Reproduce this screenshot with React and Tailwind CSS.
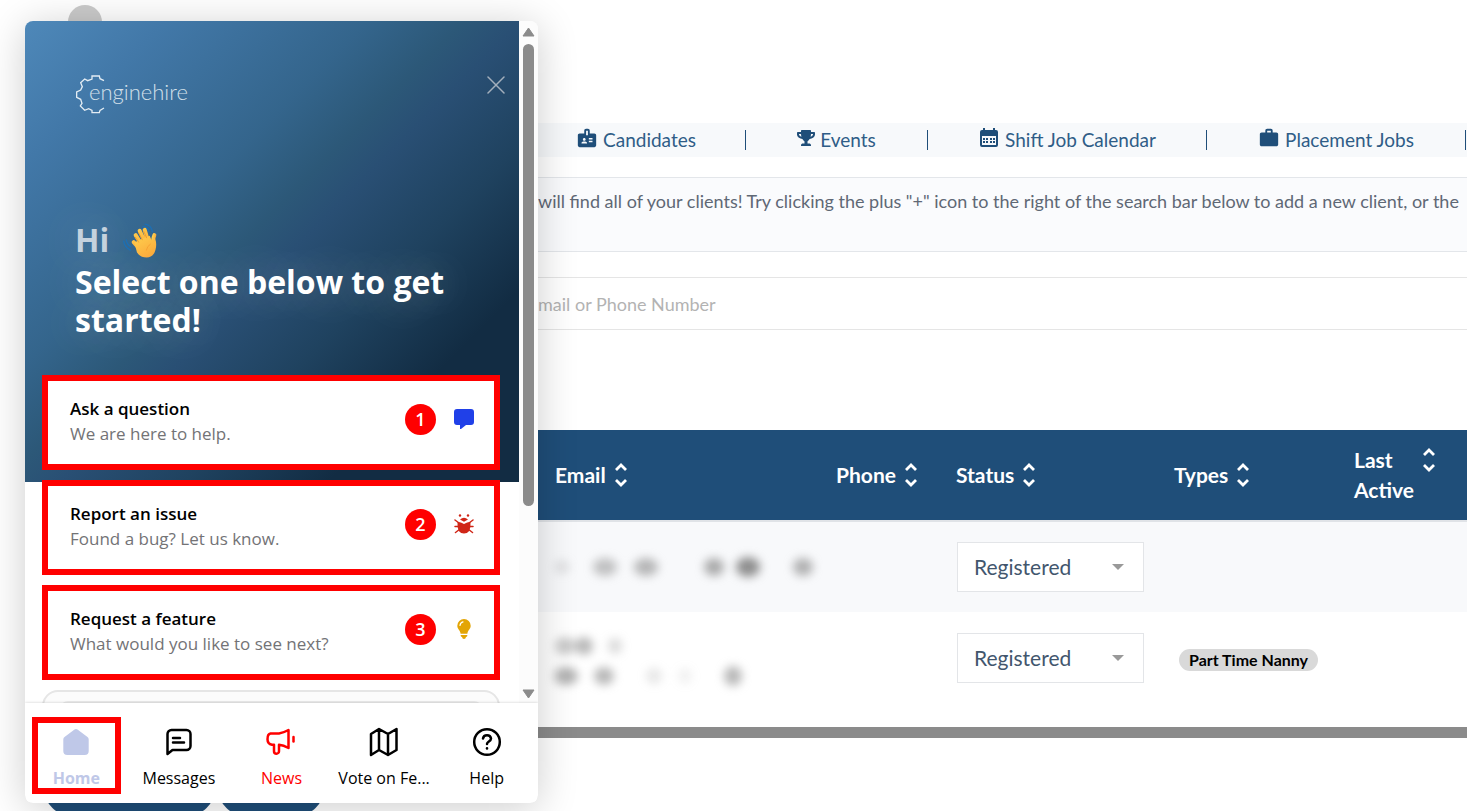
import { FaTrophy } from 'react-icons/fa'
import { MdBadge, MdWork } from 'react-icons/md'

const NAV_ITEMS = [
  { label: 'Candidates', icon: MdBadge, width: 'w-[219px]' },
  { label: 'Events', icon: FaTrophy, width: 'w-[182px]' },
  { label: 'Shift Job Calendar', icon: CalendarIcon, width: 'w-[279px]' },
  { label: 'Placement Jobs', icon: MdWork, width: 'w-[259px]' },
]

const COLUMNS = [
  { label: 'Email', width: 'w-[281px]' },
  { label: 'Phone', width: 'w-[120px]' },
  { label: 'Status', width: 'w-[218px]' },
  { label: 'Types', width: 'w-[180px]' },
  { label: 'Last Active', width: 'w-auto' },
]

const CARDS = [
  { title: 'Ask a question', text: 'We are here to help.', icon: ChatIcon },
  { title: 'Report an issue', text: 'Found a bug? Let us know.', icon: BugIcon },
  { title: 'Request a feature', text: 'What would you like to see next?', icon: BulbIcon },
]

const TABS = [
  { label: 'Home', icon: HomeIcon, color: 'border-[#ff0000] text-[#bfc8e8] font-bold' },
  { label: 'Messages', icon: MessagesIcon, color: 'border-transparent text-black' },
  { label: 'News', icon: NewsIcon, color: 'border-transparent text-[#ff0000]' },
  { label: 'Vote on Fe...', icon: MapIcon, color: 'border-transparent text-black' },
  { label: 'Help', icon: HelpIcon, color: 'border-transparent text-black' },
]

export default function App() {
  return (
    <div className="relative h-screen overflow-hidden bg-white font-[Lato,sans-serif]">
      <header className="h-[123px] px-[68px] pt-[5px]">
        <div className="size-[34px] rounded-full bg-[#cbcbcb]" />
      </header>

      <main className="ml-[538px]">
        <NavBar />
        <p className="mt-5 h-[75px] overflow-hidden border-y border-[#e3e6ea] bg-[#fafbfd] pt-[11px] text-lg leading-6 whitespace-nowrap text-[#5f6875]">
          will find all of your clients! Try clicking the plus "+" icon to the right of the search bar below to add a new client, or the
        </p>
        <input
          type="text"
          aria-label="Search clients"
          placeholder="mail or Phone Number"
          className="mt-[25px] block h-[53px] w-full border-y border-[#e5e5e5] text-lg outline-none placeholder:text-[#b3b3b3]"
        />
        <ClientTable />
      </main>

      <div className="mt-[22px] ml-[44px] flex gap-[3px]">
        <button aria-label="Add client" className="h-14 w-[171px] rounded-full bg-[#1f4e79]" />
        <button aria-label="Export" className="h-14 w-[106px] rounded-full bg-[#1f4e79]" />
      </div>

      <Messenger />
    </div>
  )
}

function NavBar() {
  return (
    <nav className="h-[34px] overflow-hidden bg-[#f7f9fb]">
      <div className="-ml-[11px] flex h-full items-center">
        {NAV_ITEMS.map(({ label, icon: Icon, width }) => (
          <a
            key={label}
            href="#"
            className={`${width} flex h-5 shrink-0 items-center justify-center gap-[5px] border-r border-[#1f4e79] text-[19px] text-[#2f5d87]`}
          >
            <Icon className={`mb-1 shrink-0 text-[#1f4e79] ${label === 'Events' ? 'size-[18px]' : 'size-[22px]'}`} />
            {label}
          </a>
        ))}
      </div>
    </nav>
  )
}

function ClientTable() {
  return (
    <div className="mt-[100px] h-[308px] border-b-[11px] border-[#8b8b8b]">
      <table className="w-full table-fixed border-collapse text-left">
        <thead>
          <tr className="h-[91px] bg-[#1f4e79] text-[21px] leading-[30px] text-white">
            {COLUMNS.map(({ label, width }) => (
              <th key={label} className={`${width} p-0 pl-[17px] font-bold`}>
                <div className="flex">
                  <span className={label === 'Last Active' ? 'w-[60px]' : ''}>{label}</span>
                  <SortIcon />
                </div>
              </th>
            ))}
          </tr>
        </thead>
        <tbody>
          <tr className="h-[91px] border-t-2 border-[#e0e3e7] bg-[#f8f9fb]">
            <td className="pl-[17px]">
              <svg width="260" height="60" className="blur-[5px]" fill="#888">
                <ellipse cx="7" cy="30" rx="8" ry="7" opacity="0.2" />
                <ellipse cx="50" cy="30" rx="12" ry="9" opacity="0.5" />
                <ellipse cx="91" cy="30" rx="12" ry="9" opacity="0.6" />
                <ellipse cx="159" cy="30" rx="10" ry="9" opacity="0.7" />
                <ellipse cx="193" cy="30" rx="12" ry="10" opacity="0.95" />
                <ellipse cx="248" cy="30" rx="10" ry="9" opacity="0.65" />
              </svg>
            </td>
            <td />
            <td className="pl-[18px]">
              <StatusSelect />
            </td>
            <td />
            <td />
          </tr>
          <tr className="h-[91px]">
            <td className="pl-[17px]">
              <svg width="260" height="70" className="blur-[5px]" fill="#888">
                <ellipse cx="10" cy="23" rx="10" ry="9" opacity="0.45" />
                <ellipse cx="29" cy="23" rx="9" ry="9" opacity="0.6" />
                <ellipse cx="60" cy="23" rx="7" ry="8" opacity="0.3" />
                <ellipse cx="11" cy="53" rx="12" ry="9" opacity="0.65" />
                <ellipse cx="49" cy="53" rx="10" ry="9" opacity="0.6" />
                <ellipse cx="99" cy="53" rx="8" ry="8" opacity="0.2" />
                <ellipse cx="130" cy="53" rx="7" ry="8" opacity="0.12" />
                <ellipse cx="178" cy="53" rx="9" ry="10" opacity="0.6" />
              </svg>
            </td>
            <td />
            <td className="pl-[18px]">
              <StatusSelect />
            </td>
            <td className="pt-1 pl-[22px]">
              <span className="inline-block rounded-full bg-[#d9d9d9] px-[10px] text-base leading-[22px] font-bold text-black">
                Part Time Nanny
              </span>
            </td>
            <td />
          </tr>
        </tbody>
      </table>
    </div>
  )
}

function StatusSelect() {
  return (
    <div className="relative w-[187px]">
      <select
        aria-label="Status"
        className="h-[50px] w-full appearance-none border border-[#e3e5e8] bg-white pl-4 text-[21px] text-[#42566d]"
      >
        <option>Registered</option>
      </select>
      <svg viewBox="0 0 12 6" className="pointer-events-none absolute top-[22px] right-5 h-[6px] w-3" fill="#999">
        <path d="M0 0h12L6 6z" />
      </svg>
    </div>
  )
}

function Messenger() {
  return (
    <section className="absolute top-[21px] left-[25px] flex h-[782px] w-[513px] flex-col overflow-hidden rounded-lg bg-white font-['Open_Sans',sans-serif] shadow-[0_5px_40px_rgba(0,0,0,0.2)]">
      <div className="flex min-h-0 flex-1">
        <div className="min-w-0 flex-1 overflow-hidden">
          <div className="h-[461px] bg-[linear-gradient(135deg,#4e88b9_0%,#4278a8_15%,#34658c_36%,#2c5878_46%,#294f74_52%,#1f425f_65%,#122c43_80%)] pt-[53px] pr-[14px] pl-[50px]">
            <div className="flex items-start justify-between">
              <Logo />
              <button aria-label="Close" className="mt-[2px]">
                <svg viewBox="0 0 18 18" className="size-[18px]" fill="none" stroke="#a3afbc" strokeWidth="1.5" strokeLinecap="round">
                  <path d="M1 1l16 16M17 1L1 17" />
                </svg>
              </button>
            </div>
            <h1 className="mt-[107px] text-[32px] leading-[38px] font-bold text-white [text-shadow:0_0_40px_rgba(255,255,255,0.35)]">
              <span className="flex items-center gap-[14px] pb-1 text-[#c5d2de]">
                Hi <WaveIcon />
              </span>
              Select one below to get started!
            </h1>
          </div>
          <div className="relative -mt-[107px] mr-[19px] ml-[17px] flex flex-col gap-[10px]">
            {CARDS.map(({ title, text, icon: Icon }, i) => (
              <button
                key={title}
                className="flex h-[95px] items-center border-6 border-[#ff0000] bg-white pr-5 pb-[3px] pl-[22px] text-left text-[17px] leading-[25px]"
              >
                <span className="flex-1">
                  <span className="block font-semibold text-black">{title}</span>
                  <span className="block text-[#737376]">{text}</span>
                </span>
                <span className="mb-1 flex items-center gap-[18px]">
                  <span className="flex size-[31px] items-center justify-center rounded-full bg-[#ff0000] text-lg font-semibold text-white">
                    {i + 1}
                  </span>
                  <Icon />
                </span>
              </button>
            ))}
            <div className="h-20 rounded-2xl border-2 border-[#e6e6e6] bg-[#fcfcfc] px-4 pt-[9px]">
              <div className="h-10 rounded-lg border-2 border-[#ececec] bg-[#f7f7f7]" />
            </div>
          </div>
        </div>
        <div className="flex w-[19px] flex-col items-center bg-[#fcfcfc] pt-[6px] pb-1">
          <svg viewBox="0 0 13 10" className="h-[10px] w-[13px]" fill="#8b8b8b" stroke="#8b8b8b" strokeLinejoin="round">
            <path d="M6.500 1L12 9H1z" />
          </svg>
          <div className="mt-[7px] h-[462px] w-[11px] rounded-full bg-[#8b8b8b]" />
          <svg viewBox="0 0 13 10" className="mt-auto h-[10px] w-[13px]" fill="#8b8b8b" stroke="#8b8b8b" strokeLinejoin="round">
            <path d="M6.500 9L12 1H1z" />
          </svg>
        </div>
      </div>
      <nav className="relative flex h-[100px] bg-white pt-[14px] pb-[9px] shadow-[0_0_3px_rgba(0,0,0,0.2)]">
        {TABS.map(({ label, icon: Icon, color }) => (
          <button
            key={label}
            className={`${color} mx-[7px] flex min-w-0 flex-1 basis-0 flex-col items-center border-6 pt-1 text-base leading-5 whitespace-nowrap`}
          >
            <Icon />
            <span className="mt-[11px]">{label}</span>
          </button>
        ))}
      </nav>
    </section>
  )
}

function Logo() {
  return (
    <div className="flex items-start">
      <svg viewBox="165 222 90 120" className="h-10 w-[30px]" fill="none" stroke="#e3ecf3" strokeWidth="4">
        <path d="M252 242l-12-6-2-8h-22v9l-13 5-9-5-12 11 5 12-5 10-12 6v16l12 6 4 12-5 8 13 13 12-5 10 5v7h22l2-7 12-7" />
      </svg>
      <span className="-ml-[16px] pt-1 font-[Lato,sans-serif] text-[22px] leading-7 font-light text-[#d3e0ea]">enginehire</span>
    </div>
  )
}

function WaveIcon() {
  return (
    <svg viewBox="0 0 102 104" className="h-[35px] w-[34px]" fill="none" strokeLinecap="round">
      <defs>
        <linearGradient id="hand" x1="0" y1="0" x2="0.6" y2="1">
          <stop offset="0" stopColor="#ffd04f" />
          <stop offset="1" stopColor="#fbab3b" />
        </linearGradient>
      </defs>
      <path d="M66 3q18 2 22 22M60 10q14 2 18 16" stroke="#1c6fb5" strokeWidth="4" />
      <path d="M2 54q2 18 20 27M10 50q1 12 13 20" stroke="#1c6fb5" strokeWidth="4" />
      <g stroke="url(#hand)" strokeWidth="12">
        <path d="M32 57l18 20M38 36l20 32M50 23l18 38M65 20l12 40" />
        <path d="M94 36q-6 14-2 34" />
      </g>
      <path d="M34 58q20-10 46-20l6 14q4-6 4-12 12 10 9 32-4 30-28 31-19 0-29-15z" fill="url(#hand)" />
      <path d="M47 57L37 42M58 50L47 29M71 44l-9-20" stroke="#e98f22" strokeWidth="2" />
      <path d="M82 63q-10 6-12 18" stroke="#f3992e" strokeWidth="2" />
    </svg>
  )
}

function CalendarIcon({ className }) {
  return (
    <svg viewBox="0 0 22 22" className={className} fill="currentColor">
      <path
        fillRule="evenodd"
        d="M5 1h2v2h8V1h2v2h1a2 2 0 0 1 2 2v13a2 2 0 0 1-2 2H4a2 2 0 0 1-2-2V5a2 2 0 0 1 2-2h1zM4 9v9h14V9z"
      />
      <path d="M5 11h2v2H5zM8 11h2v2H8zM12 11h2v2h-2zM15 11h2v2h-2zM5 14h2v2H5zM8 14h2v2H8zM12 14h2v2h-2zM15 14h2v2h-2z" />
    </svg>
  )
}

function SortIcon() {
  return (
    <svg viewBox="0 0 12 24" className="mt-[3px] ml-[9px] h-6 w-3 shrink-0" fill="none" stroke="currentColor" strokeWidth="2.800">
      <path d="M1 7l5-5 5 5M1 17l5 5 5-5" />
    </svg>
  )
}

function ChatIcon() {
  return (
    <svg viewBox="0 0 20 20" className="size-5" fill="#2040e8">
      <path d="M3 0h14a3 3 0 0 1 3 3v10a3 3 0 0 1-3 3h-5l-5 4h-1v-4H3a3 3 0 0 1-3-3V3a3 3 0 0 1 3-3z" />
    </svg>
  )
}

function BugIcon() {
  return (
    <svg viewBox="0 0 20 20" className="size-5" fill="#d02617">
      <circle cx="6" cy="1.500" r="1.200" />
      <circle cx="14" cy="1.500" r="1.200" />
      <path d="M6 5.500q4-3.500 8 0l-4 2.300z" />
      <path d="M3.500 8q3.500 0 6.500 2 3-2 6.500-2 .8 11.500-6.500 11.500T3.500 8z" />
      <path
        d="M1 6l4 3M1 12.500h5M1.500 18.500L6 15M19 6l-4 3M19 12.500h-5M18.500 18.500L14 15"
        stroke="#d02617"
        strokeWidth="1.500"
        strokeLinecap="round"
      />
    </svg>
  )
}

function BulbIcon() {
  return (
    <svg viewBox="0 0 20 20" className="size-5" fill="#e3a505">
      <path d="M10 0a6.700 6.700 0 0 1 6.700 6.700c0 3.300-3 4.500-3.300 8H6.600c-.3-3.500-3.300-4.700-3.300-8A6.700 6.700 0 0 1 10 0z" />
      <path d="M6.600 16h6.800q0 1.800-1.400 2-.3 2-2 2t-2-2q-1.400-.2-1.400-2z" />
      <path d="M6 6.500q.3-3 3-3.600" fill="none" stroke="#fff" strokeWidth="1.200" strokeLinecap="round" />
    </svg>
  )
}

function HomeIcon() {
  return (
    <svg viewBox="0 0 30 30" className="size-[30px]" fill="currentColor">
      <path d="M13.500 2.600a2.500 2.500 0 0 1 3 0l10 7.500a3 3 0 0 1 1.200 2.400V24a4 4 0 0 1-4 4H6.300a4 4 0 0 1-4-4V12.500a3 3 0 0 1 1.200-2.400z" />
    </svg>
  )
}

function MessagesIcon() {
  return (
    <svg viewBox="0 0 30 30" className="size-[30px]" fill="none" stroke="currentColor" strokeWidth="2.500" strokeLinecap="round" strokeLinejoin="round">
      <path d="M3.500 27V7a4 4 0 0 1 4-4h15a4 4 0 0 1 4 4v12a4 4 0 0 1-4 4H8.500z" />
      <path d="M9 11h7M9 15.500h11" />
    </svg>
  )
}

function NewsIcon() {
  return (
    <svg viewBox="0 0 30 30" className="size-[30px]" fill="none" stroke="currentColor" strokeWidth="2.500" strokeLinecap="round" strokeLinejoin="round">
      <path d="M4.500 6.500h8.500q4-.5 9.500-3.500v18q-5-2.800-9.500-3.200v6.400a2.500 2.500 0 0 1-5 0v-6.400H6q-4.500-1-4.500-5.600 0-5.200 3-5.700z" />
      <path d="M27.500 10v4.500" />
    </svg>
  )
}

function MapIcon() {
  return (
    <svg viewBox="0 0 30 30" className="size-[30px]" fill="none" stroke="currentColor" strokeWidth="2.500" strokeLinejoin="round">
      <path d="M2 7l8-5 9 5 8.500-5v21L19 28l-9-5-8 5zM10 2v21M19 7v21" />
    </svg>
  )
}

function HelpIcon() {
  return (
    <svg viewBox="0 0 30 30" className="size-[30px]" fill="none" stroke="currentColor" strokeWidth="2.500" strokeLinecap="round">
      <circle cx="15" cy="15" r="12.800" />
      <path d="M11 11.500q.5-3.300 4-3.300t4 3.200c0 3-4 3-4 5.600" />
      <path d="M15 21.300v.1" />
    </svg>
  )
}
